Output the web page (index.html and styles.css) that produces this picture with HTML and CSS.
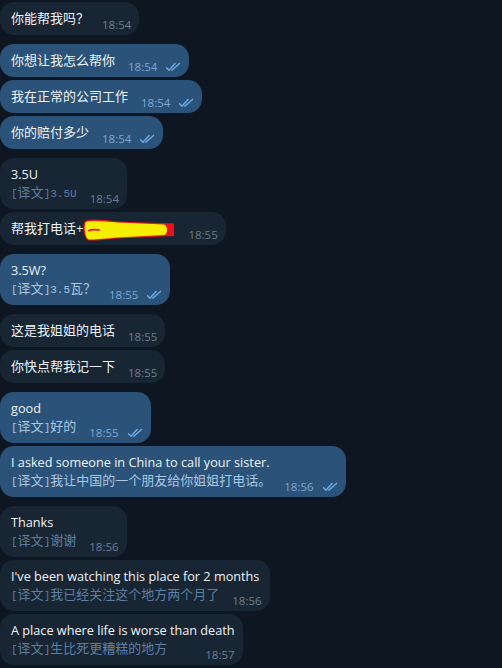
FILE: index.html
```html
<!DOCTYPE html>
<html lang="zh">
<head>
<meta charset="utf-8">
<title>Chat</title>
<link rel="stylesheet" href="styles.css">
</head>
<body>
<div class="chat">
  <div class="group">
    <div class="msg in">
      <div class="last"><span class="txt">你能帮我吗？</span><span class="meta"><span class="time">18:54</span></span></div>
    </div>
  </div>

  <div class="group">
    <div class="msg out">
      <div class="last"><span class="txt">你想让我怎么帮你</span><span class="meta"><span class="time">18:54</span><svg class="ticks" viewBox="0 0 16 10"><path d="M1.5 5.8 L4 8.3 L10 1.5"/><path d="M6.8 8.3 L14.5 1.5"/></svg></span></div>
    </div>
    <div class="msg out">
      <div class="last"><span class="txt">我在正常的公司工作</span><span class="meta"><span class="time">18:54</span><svg class="ticks" viewBox="0 0 16 10"><path d="M1.5 5.8 L4 8.3 L10 1.5"/><path d="M6.8 8.3 L14.5 1.5"/></svg></span></div>
    </div>
    <div class="msg out">
      <div class="last"><span class="txt">你的赔付多少</span><span class="meta"><span class="time">18:54</span><svg class="ticks" viewBox="0 0 16 10"><path d="M1.5 5.8 L4 8.3 L10 1.5"/><path d="M6.8 8.3 L14.5 1.5"/></svg></span></div>
    </div>
  </div>

  <div class="group">
    <div class="msg in">
      <div class="line">3.5U</div>
      <div class="last"><span class="tr"><span class="mono">[</span>译文<span class="mono">]3.5U</span></span><span class="meta"><span class="time">18:54</span></span></div>
    </div>
    <div class="msg in">
      <div class="last"><span class="txt">帮我打电话+<svg class="scribble" viewBox="0 0 92 20" width="92" height="20"><path class="red" d="M2 1 C8 -1.5 20 -0.5 35 1.5 L91 3.5 L91 16 L35 18.5 C22 19.5 12 21 6 20.5 C0 19.5 -1 3 2 1 Z"/><path class="yellow" d="M3 2 C8 0 20 1 35 2.5 L81 4.5 C85 5.5 85 14.5 81 15 L35 17.5 C22 18.5 12 19.8 6 19.4 C1.5 18.5 0.8 4 3 2 Z"/><path class="dash" d="M6 10.5 C9 9 12 9.5 16 10"/></svg></span><span class="meta"><span class="time">18:55</span></span></div>
    </div>
  </div>

  <div class="group">
    <div class="msg out">
      <div class="line">3.5W?</div>
      <div class="last"><span class="tr"><span class="mono">[</span>译文<span class="mono">]3.5</span>瓦？</span><span class="meta"><span class="time">18:55</span><svg class="ticks" viewBox="0 0 16 10"><path d="M1.5 5.8 L4 8.3 L10 1.5"/><path d="M6.8 8.3 L14.5 1.5"/></svg></span></div>
    </div>
  </div>

  <div class="group">
    <div class="msg in">
      <div class="last"><span class="txt">这是我姐姐的电话</span><span class="meta"><span class="time">18:55</span></span></div>
    </div>
    <div class="msg in">
      <div class="last"><span class="txt">你快点帮我记一下</span><span class="meta"><span class="time">18:55</span></span></div>
    </div>
  </div>

  <div class="group">
    <div class="msg out">
      <div class="line">good</div>
      <div class="last"><span class="tr"><span class="mono">[</span>译文<span class="mono">]</span>好的</span><span class="meta"><span class="time">18:55</span><svg class="ticks" viewBox="0 0 16 10"><path d="M1.5 5.8 L4 8.3 L10 1.5"/><path d="M6.8 8.3 L14.5 1.5"/></svg></span></div>
    </div>
    <div class="msg out">
      <div class="line">I asked someone in China to call your sister.</div>
      <div class="last"><span class="tr"><span class="mono">[</span>译文<span class="mono">]</span>我让中国的一个朋友给你姐姐打电话。</span><span class="meta"><span class="time">18:56</span><svg class="ticks" viewBox="0 0 16 10"><path d="M1.5 5.8 L4 8.3 L10 1.5"/><path d="M6.8 8.3 L14.5 1.5"/></svg></span></div>
    </div>
  </div>

  <div class="group">
    <div class="msg in">
      <div class="line">Thanks</div>
      <div class="last"><span class="tr"><span class="mono">[</span>译文<span class="mono">]</span>谢谢</span><span class="meta"><span class="time">18:56</span></span></div>
    </div>
    <div class="msg in">
      <div class="line">I've been watching this place for 2 months</div>
      <div class="last"><span class="tr"><span class="mono">[</span>译文<span class="mono">]</span>我已经关注这个地方两个月了</span><span class="meta"><span class="time">18:56</span></span></div>
    </div>
    <div class="msg in">
      <div class="line">A place where life is worse than death</div>
      <div class="last"><span class="tr"><span class="mono">[</span>译文<span class="mono">]</span>生比死更糟糕的地方</span><span class="meta"><span class="time">18:57</span></span></div>
    </div>
  </div>
</div>
</body>
</html>
```

FILE: styles.css
```css
html, body {
  margin: 0;
  padding: 0;
  background: #0e1621;
}

body {
  font-family: "Open Sans", "Noto Sans CJK SC", sans-serif;
  font-size: 13px;
  color: #eef2f6;
  width: 502px;
  height: 668px;
  overflow: hidden;
}

.chat {
  display: flex;
  flex-direction: column;
  gap: 9px;
  padding-top: 2px;
}

.group {
  display: flex;
  flex-direction: column;
  align-items: flex-start;
  gap: 3px;
}

.msg {
  display: flex;
  flex-direction: column;
  padding: 7px 8px 8px 11px;
  border-radius: 14px;
  line-height: 18px;
  white-space: nowrap;
}

.msg.in {
  background: #182533;
}

.msg.out {
  background: #2b5278;
}

.line {
  height: 18px;
  font-size: 12.7px;
}

.last {
  display: flex;
  align-items: flex-start;
  height: 18px;
}

.txt, .tr {
  height: 18px;
}

.meta {
  display: flex;
  align-items: center;
  margin-left: auto;
  padding-left: 13px;
  align-self: flex-end;
  height: 14px;
  margin-bottom: -5px;
}

.time {
  font-size: 11.5px;
  line-height: 14px;
}

.in .time {
  color: #6d7f8f;
}

.out .time {
  color: #7da8d3;
}

.ticks {
  width: 16px;
  height: 10px;
  margin-left: 8px;
  fill: none;
  stroke: #6aaee8;
  stroke-width: 1.4;
  stroke-linecap: round;
  stroke-linejoin: round;
}

.mono {
  font-family: "Liberation Mono", monospace;
  font-size: 11px;
}

.in .tr {
  color: #5b7fa3;
}

.out .tr {
  color: #a9c6e4;
}

.scribble {
  vertical-align: middle;
  margin: -4px 0 -4px 0;
  overflow: visible;
}

.scribble .red {
  fill: #e3141b;
}

.scribble .yellow {
  fill: #f5ee00;
}

.scribble .dash {
  fill: none;
  stroke: #e3141b;
  stroke-width: 1.8;
  stroke-linecap: round;
}
```
